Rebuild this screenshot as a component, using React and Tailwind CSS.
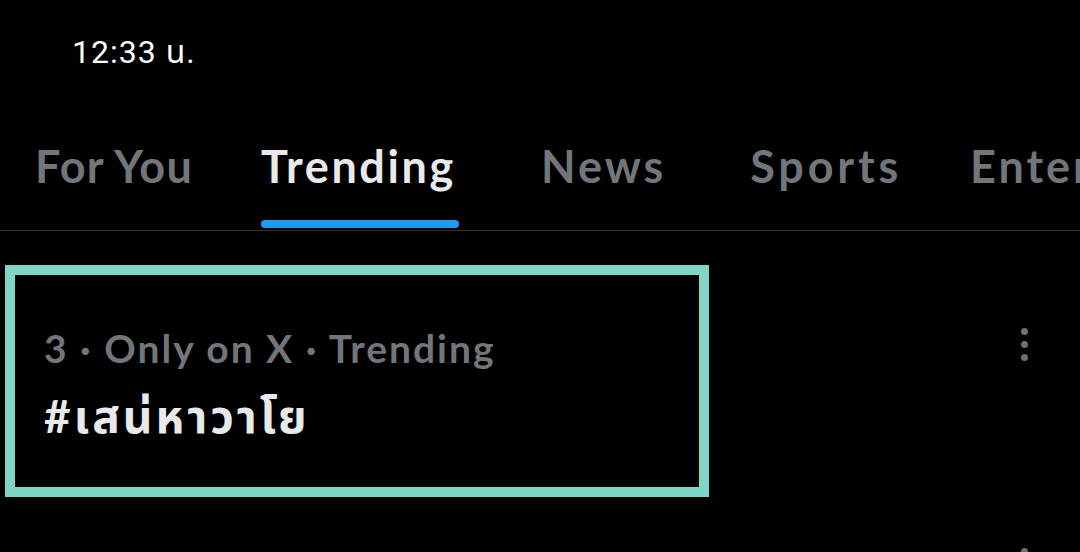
import React from 'react';

const tabs = [
  { label: 'For You', ml: 'ml-[35px]', tr: 'tracking-[1.2px]' },
  { label: 'Trending', ml: 'ml-[68px]', tr: 'tracking-[2.6px]', active: true },
  { label: 'News', ml: 'ml-[82px]', tr: 'tracking-[3px]' },
  { label: 'Sports', ml: 'ml-[84px]', tr: 'tracking-[3.8px]' },
  { label: 'Entertainment', ml: 'ml-[68px]', tr: 'tracking-[3px]' },
];

const Dots = () => (
  <div className="flex flex-col items-center gap-[6px]">
    <span className="w-[7px] h-[7px] rounded-full bg-[#6f7175]" />
    <span className="w-[7px] h-[7px] rounded-full bg-[#6f7175]" />
    <span className="w-[7px] h-[7px] rounded-full bg-[#6f7175]" />
  </div>
);

export default function App() {
  return (
    <div
      className="w-[1080px] h-[552px] bg-black overflow-hidden flex flex-col"
      style={{ fontFamily: 'Lato, "Noto Sans", "Noto Sans Thai", sans-serif' }}
    >
      {/* status bar */}
      <div className="h-[100px] shrink-0 pl-[72px] pt-[36px]">
        <span
          className="text-white text-[32px] leading-none tracking-[1px]"
          style={{ fontFamily: 'Roboto, "Noto Sans", "Noto Sans Thai", sans-serif' }}
        >
          12:33 น.
        </span>
      </div>

      {/* tabs */}
      <div className="h-[131px] shrink-0 flex flex-nowrap border-b border-[#2f3336] whitespace-nowrap">
        {tabs.map(({ label, ml, tr, active }) => (
          <div key={label} className={`${ml} shrink-0 flex flex-col items-start pt-[44px]`}>
            <span
              className={`text-[45px] leading-none font-bold ${tr} ${
                active ? 'text-[#e7e9ea]' : 'text-[#71767b]'
              }`}
            >
              {label}
            </span>
            {active && <div className="mt-auto w-[198px] h-[8px] rounded-full bg-[#1d9bf0] mb-[2px]" />}
          </div>
        ))}
      </div>

      {/* trend row */}
      <div className="flex shrink-0 pt-[34px]">
        <div className="ml-[5px] w-[704px] h-[232px] border-[10px] border-[#80d6c5] pl-[29px] pt-[54px]">
          <div className="text-[39px] leading-none font-bold tracking-[2px] text-[#71767b]">
            3 · Only on X · Trending
          </div>
          <div className="mt-[25px] text-[46px] leading-none font-bold tracking-[3px] text-[#e7e9ea]">
            #เสน่หาวาโย
          </div>
        </div>
        <div className="ml-auto mr-[52px] pt-[63px]">
          <Dots />
        </div>
      </div>

      {/* next row (cut off) */}
      <div className="flex shrink-0 pt-[51px]">
        <div className="ml-auto mr-[52px]">
          <Dots />
        </div>
      </div>
    </div>
  );
}
